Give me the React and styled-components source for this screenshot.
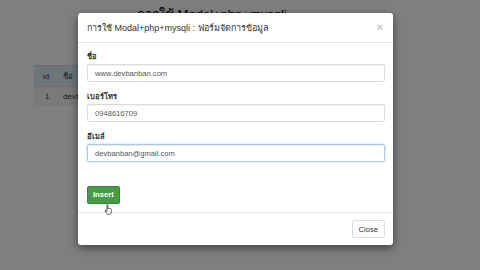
import React from 'react';
import styled, { createGlobalStyle } from 'styled-components';

const GlobalStyle = createGlobalStyle`
  html, body {
    margin: 0;
    padding: 0;
    width: 480px;
    height: 270px;
    overflow: hidden;
    background: #ffffff;
    font-family: "Liberation Sans", "Noto Sans", "DejaVu Sans", sans-serif;
  }
`;

const Page = styled.div`
  position: relative;
  width: 480px;
  height: 270px;
  overflow: hidden;
`;

const PageTitle = styled.h2`
  margin: 0;
  padding: 8px 0 0 137px;
  height: 13px;
  line-height: 13px;
  font-size: 13px;
  font-weight: normal;
  color: #000;
  white-space: nowrap;
`;

const Table = styled.table`
  margin: 44px 0 0 34px;
  border-collapse: collapse;
  table-layout: fixed;
  width: 200px;
  font-size: 8px;
  color: #333;
`;

const HeadRow = styled.tr`
  background: #d9edf7;
  height: 21px;
`;

const BodyRow = styled.tr`
  background: #f5f5f5;
  height: 19px;
`;

const Col = styled.col`
  width: ${(p) => p.$w};
`;

const Cell = styled.td`
  padding: 0 0 0 ${(p) => p.$pad ?? 9}px;
  border-top: 1px solid #ddd;
  text-align: left;
  white-space: nowrap;
`;

const Backdrop = styled.div`
  position: absolute;
  inset: 0;
  background: rgba(0, 0, 0, 0.5);
  display: flex;
  align-items: flex-start;
`;

const Dialog = styled.div`
  margin: 13px 0 0 78px;
  width: 315px;
  height: 232px;
  background: #fff;
  border-radius: 3px;
  box-shadow: 0 3px 8px rgba(0, 0, 0, 0.5);
  display: flex;
  flex-direction: column;
  color: #333;
`;

const Header = styled.div`
  display: flex;
  align-items: center;
  justify-content: space-between;
  height: 29px;
  padding: 0 9px 0 9px;
  border-bottom: 1px solid #e5e5e5;
`;

const Title = styled.h4`
  margin: 0;
  font-size: 9px;
  font-weight: normal;
  color: #333;
`;

const CloseX = styled.span`
  font-size: 11px;
  font-weight: bold;
  color: #c4c4c4;
  line-height: 1;
  margin-right: 1px;
`;

const Body = styled.div`
  flex: 1;
  padding: 8px 8px 0 9px;
  border-bottom: 1px solid #e5e5e5;
`;

const Group = styled.div`
  display: flex;
  flex-direction: column;
  margin-bottom: ${(p) => p.$mb || 9}px;
`;

const Label = styled.label`
  font-size: 7.5px;
  font-weight: bold;
  color: #333;
  height: 13px;
  line-height: 12px;
`;

const Input = styled.div`
  box-sizing: border-box;
  height: 18px;
  width: 298px;
  padding: 0 7px;
  display: flex;
  align-items: center;
  font-size: 7.6px;
  color: #555;
  border: 1px solid ${(p) => (p.$focus ? '#a9c9e6' : '#dcdcdc')};
  border-radius: 2px;
  box-shadow: ${(p) =>
    p.$focus
      ? 'inset 0 1px 1px rgba(0,0,0,.075), 0 0 3px rgba(102,175,233,.5)'
      : 'inset 0 1px 1px rgba(0,0,0,.06)'};
`;

const Button = styled.button`
  position: relative;
  box-sizing: border-box;
  height: 18px;
  padding: 0 ${(p) => (p.$primary ? 5 : 6)}px;
  font-family: inherit;
  font-size: 7.6px;
  font-weight: ${(p) => (p.$primary ? 'bold' : 'normal')};
  color: ${(p) => (p.$primary ? '#fff' : '#333')};
  background: ${(p) => (p.$primary ? '#449d44' : '#fff')};
  border: 1px solid ${(p) => (p.$primary ? '#398439' : '#ddd')};
  border-radius: 2px;
`;

const Footer = styled.div`
  display: flex;
  justify-content: flex-end;
  align-items: center;
  height: 32px;
  padding: 0 8px;
`;

const Cursor = styled.svg`
  position: absolute;
  left: 16px;
  top: 17px;
`;

const HandCursor = () => (
  <Cursor width="10" height="11" viewBox="0 0 10 11">
    <path
      d="M3 1.2c0-.6.9-.6.9 0V5l.2-.4c.3-.5 1-.4 1 .1l.2-.1c.3-.4 1-.3 1 .2.3-.3 1-.2 1 .3V8c0 1.5-1 2.5-2.5 2.5H4.3C3.4 10.5 2.8 10 2.3 9.2L1 7c-.3-.5.3-1 .8-.6L3 7.4V1.2z"
      fill="#fff"
      stroke="#222"
      strokeWidth="0.7"
      strokeLinejoin="round"
    />
  </Cursor>
);

const App = () => {
  return (
    <Page>
      <GlobalStyle />
      <PageTitle>การใช้ Modal+php+mysqli</PageTitle>
      <Table>
        <colgroup>
          <Col $w="29px" />
          <Col $w="171px" />
        </colgroup>
        <tbody>
          <HeadRow>
            <Cell>id</Cell>
            <Cell $pad={0}>ชื่อ</Cell>
          </HeadRow>
          <BodyRow>
            <Cell $pad={11}>1</Cell>
            <Cell $pad={0}>devbanban</Cell>
          </BodyRow>
        </tbody>
      </Table>
      <Backdrop>
        <Dialog>
          <Header>
            <Title>การใช้ Modal+php+mysqli : ฟอร์มจัดการข้อมูล</Title>
            <CloseX>×</CloseX>
          </Header>
          <Body>
            <Group>
              <Label>ชื่อ</Label>
              <Input>www.devbanban.com</Input>
            </Group>
            <Group>
              <Label>เบอร์โทร</Label>
              <Input>0948616709</Input>
            </Group>
            <Group $mb={21}>
              <Label>อีเมล์</Label>
              <Input $focus>devbanban@gmail.com</Input>
            </Group>
            <Button $primary>
              Insert
              <HandCursor />
            </Button>
          </Body>
          <Footer>
            <Button>Close</Button>
          </Footer>
        </Dialog>
      </Backdrop>
    </Page>
  );
};

export default App;
